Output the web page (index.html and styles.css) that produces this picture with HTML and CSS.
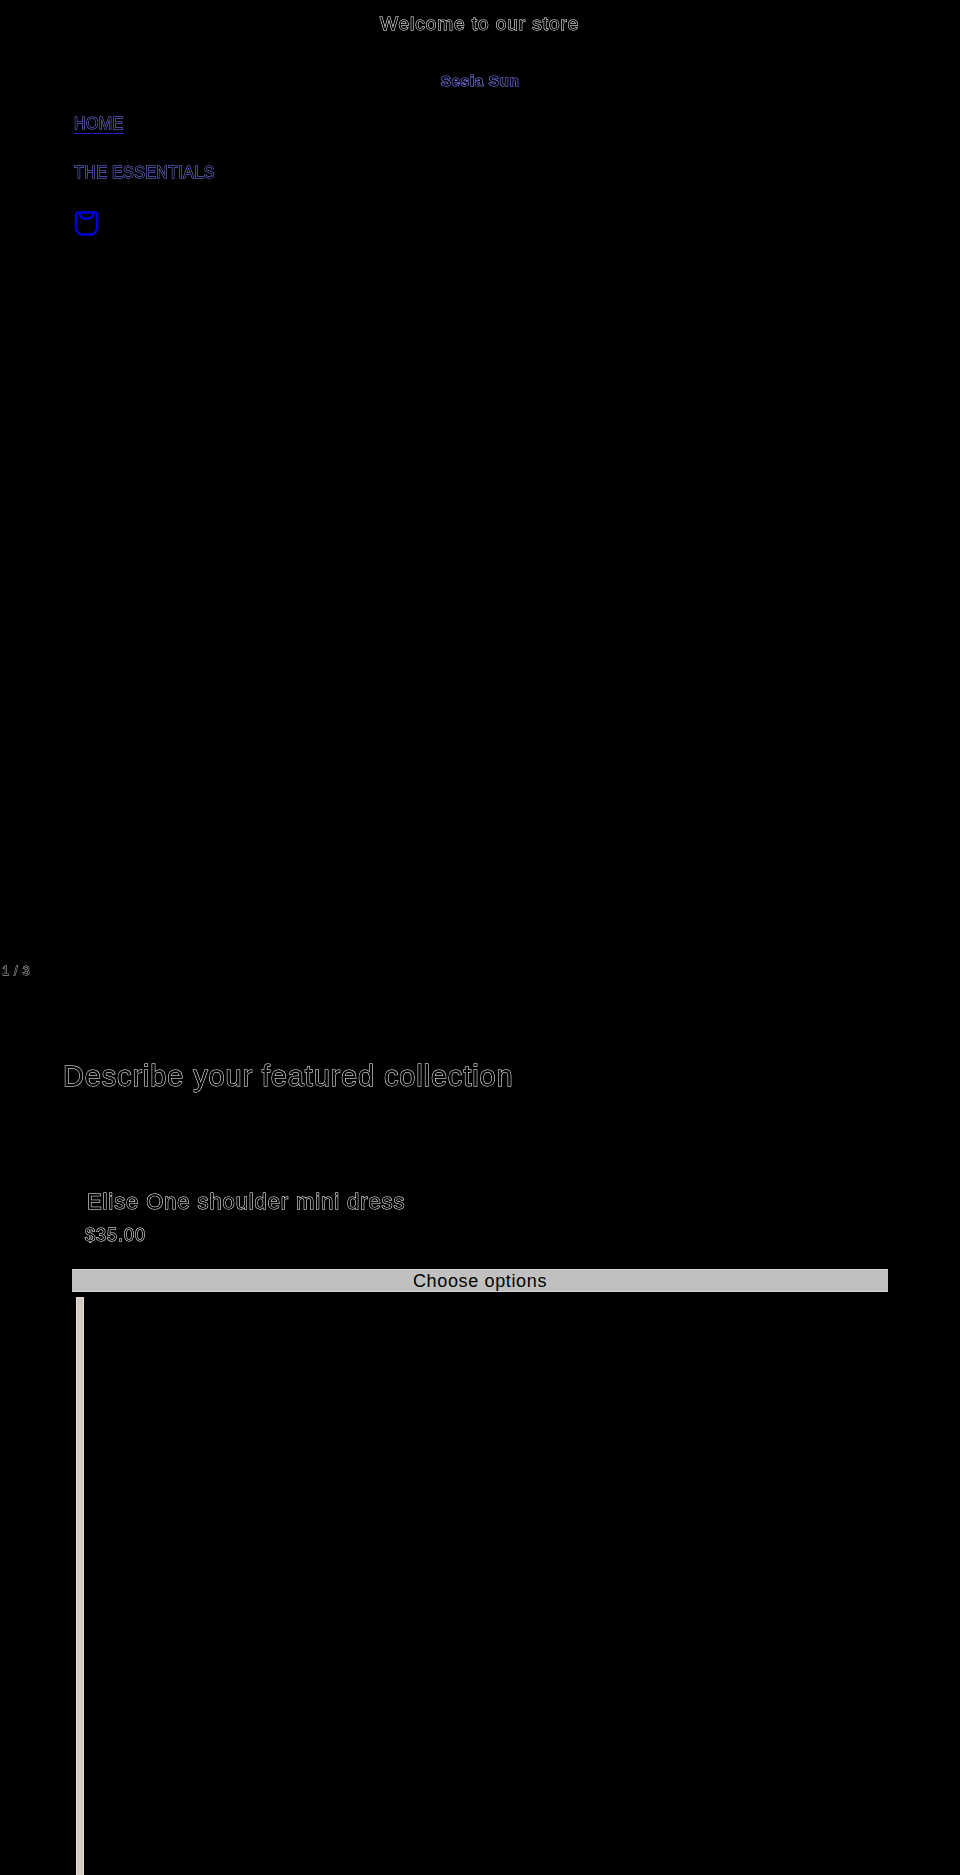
FILE: index.html
```html
<!DOCTYPE html>
<html lang="en">
<head>
<meta charset="utf-8">
<title>Sesia Sun</title>
<link rel="stylesheet" href="styles.css">
</head>
<body>
<div class="announcement"><p class="announcement-text">Welcome to our store</p></div>
<header class="header">
  <a class="brand" href="#">Sesia Sun</a>
  <nav class="nav">
    <a class="nav-link nav-link-active" href="#">HOME</a>
    <a class="nav-link" href="#">THE ESSENTIALS</a>
    <a class="cart" href="#" aria-label="Cart">
      <svg class="cart-icon" viewBox="0 0 26 26" width="25" height="25" fill="none" stroke="currentColor" stroke-width="2.5" stroke-linejoin="round">
        <path d="M4.500 1.500h17a2.500 2.500 0 0 1 2.500 2.500V17.500a7 7 0 0 1-7 7H9a7 7 0 0 1-7-7V4a2.500 2.500 0 0 1 2.500-2.500z"/>
        <path d="M6 2c0 4 2.500 6 7 6s7-2 7-6"/>
      </svg>
    </a>
  </nav>
</header>
<section class="hero"><span class="counter">1 / 3</span></section>
<section class="featured">
  <h2 class="featured-title">Describe your featured collection</h2>
  <div class="product">
    <h3 class="product-title">Elise One shoulder mini dress</h3>
    <p class="product-price">$35.00</p>
    <button class="product-button" type="button">Choose options</button>
    <div class="product-media"></div>
  </div>
</section>
</body>
</html>
```
FILE: styles.css
```css
* { box-sizing: border-box; }
html, body { margin: 0; background: #000; }
body {
  height: 1875px;
  overflow: hidden;
  font-family: "Liberation Sans", Arial, sans-serif;
  color: #000;
}
a { text-decoration: none; }
p, h2, h3 { margin: 0; font-weight: 400; }

.announcement {
  height: 48px;
  display: flex;
  justify-content: center;
  align-items: center;
}
.announcement-text, .counter, .featured-title, .product-title, .product-price, .nav-link, .brand {
  color: #000;
  paint-order: stroke fill;
  will-change: transform;
}
.announcement-text {
  font-size: 19px;
  letter-spacing: 0.95px;
  -webkit-text-stroke: 1px #fff;
}
.header { display: flex; flex-direction: column; padding: 0 74px; }
.brand {
  align-self: center;
  margin-top: 24px;
  font-size: 15px;
  line-height: 17px;
  font-weight: 700;
  letter-spacing: 0.75px;
  -webkit-text-stroke: 1.2px #8080ff;
}
.nav { display: flex; flex-direction: column; align-items: flex-start; margin-top: 25px; }
.nav-link {
  font-size: 16px;
  line-height: 19px;
  letter-spacing: 0.4px;
  -webkit-text-stroke: 1px #8080ff;
  margin-bottom: 30px;
}
.nav-link-active { border-bottom: 1px solid #2020c8; margin-bottom: 29px; }
.cart { display: block; color: #0000dc; margin-top: -1px; height: 26px; }
.cart-icon { display: block; }

.hero {
  display: flex;
  align-items: flex-end;
  height: 747px;
  padding: 0 0 6px 2px;
}
.counter {
  font-size: 13px;
  line-height: 15px;
  letter-spacing: 0.6px;
  -webkit-text-stroke: 0.8px #d0d0d0;
}
.featured { padding: 0 72px; }
.featured-title {
  margin: 75px 0 0 -9px;
  font-size: 29px;
  line-height: 34px;
  letter-spacing: 0.85px;
  -webkit-text-stroke: 1px #fff;
}
.product-title {
  margin: 96px 0 0 15px;
  font-size: 22px;
  line-height: 25px;
  letter-spacing: 0.9px;
  -webkit-text-stroke: 1px #fff;
}
.product-price {
  margin: 11px 0 0 13px;
  font-size: 18px;
  line-height: 21px;
  letter-spacing: 1px;
  -webkit-text-stroke: 1px #fff;
}
.product-button {
  display: block;
  width: 816px;
  height: 23px;
  margin: 23px 0 0 0;
  padding: 0;
  border: 0;
  border-top: 1px solid #d4d4d4;
  border-bottom: 1px solid #d4d4d4;
  background: #c0c0c0;
  color: #000;
  font: 400 18px/20px "Liberation Sans", Arial, sans-serif;
  letter-spacing: 0.65px;
}
.product-media {
  width: 8px;
  height: 600px;
  margin: 5px 0 0 4px;
  background: #d2cdc0;
  border: 1px solid #e2dfd6;
  border-bottom: 0;
}
```
